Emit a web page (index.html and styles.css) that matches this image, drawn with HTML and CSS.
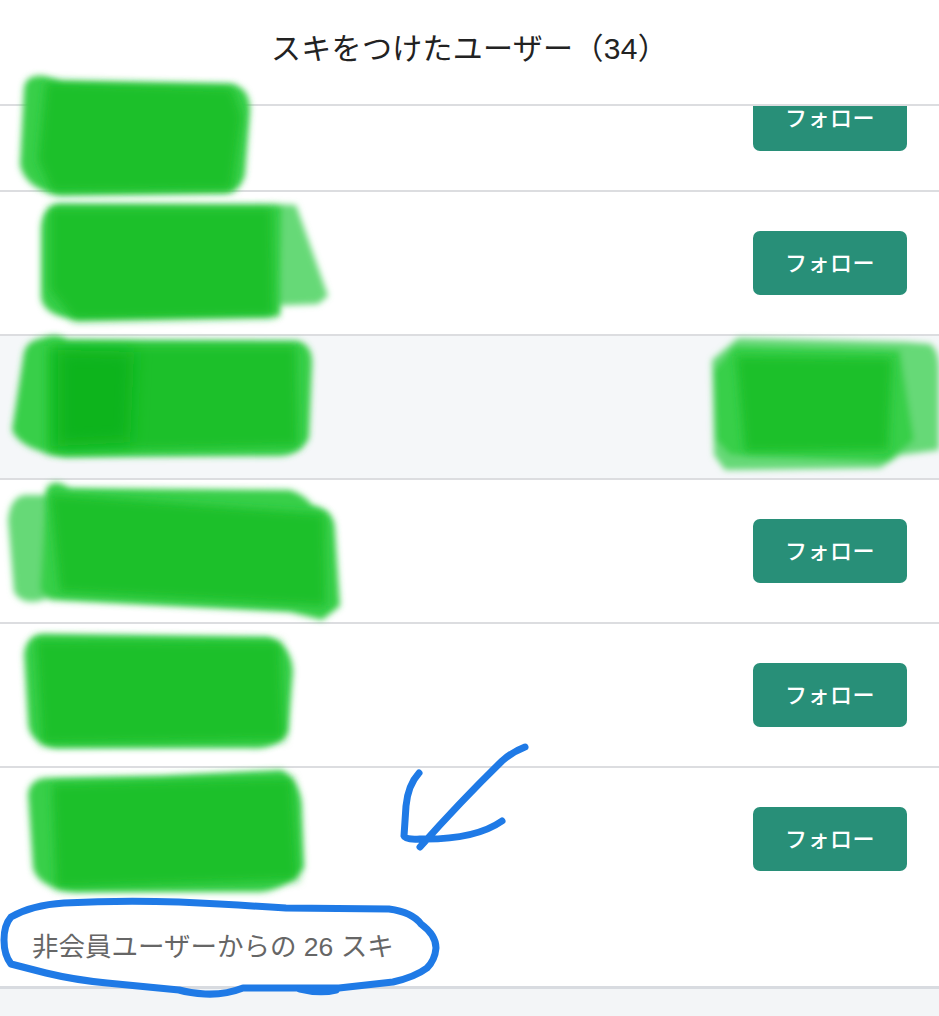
FILE: index.html
```html
<!DOCTYPE html>
<html lang="ja">
<head>
  <meta charset="UTF-8">
  <meta name="viewport" content="width=device-width, initial-scale=1.0">
  <title>スキをつけたユーザー</title>
  <link rel="stylesheet" href="styles.css">
</head>
<body>
  <div class="page">
    <h1 class="title">スキをつけたユーザー（34）</h1>

    <!-- User list, first row is scrolled under the header -->
    <ul class="user-list">
      <li class="user-row cut"><button class="follow cut-btn">フォロー</button></li>
      <li class="user-row"><button class="follow">フォロー</button></li>
      <li class="user-row self"></li>
      <li class="user-row"><button class="follow">フォロー</button></li>
      <li class="user-row"><button class="follow">フォロー</button></li>
      <li class="user-row last"><button class="follow">フォロー</button></li>
    </ul>

    <p class="guest-likes">非会員ユーザーからの 26 スキ</p>
    <div class="page-end"></div>

    <!-- Hand drawn marks on top of the screenshot -->
    <svg class="marks" width="939" height="1016" viewBox="0 0 939 1016">
      <defs>
        <filter id="soft" x="-10%" y="-10%" width="120%" height="120%">
          <feGaussianBlur stdDeviation="3"/>
        </filter>
        <filter id="softer" x="-10%" y="-10%" width="120%" height="120%">
          <feGaussianBlur stdDeviation="5"/>
        </filter>
        <filter id="softest" x="-30%" y="-30%" width="160%" height="160%">
          <feGaussianBlur stdDeviation="8"/>
        </filter>
      </defs>
      <g filter="url(#soft)">
        <path class="pale" d="M24 88 Q26 74 44 76 L62 82 L232 84 Q250 88 250 110 L245 175 Q240 192 225 193 L60 195 Q26 190 20 165 Z"/>

        <path class="faint" d="M270 204 L296 205 L328 296 L318 304 L270 306 Z"/>
        <path class="pale" d="M58 204 L282 205 L280 316 L75 319 Q44 316 41 298 L41 228 Q42 208 58 204 Z"/>

        <path class="pale" d="M24 352 Q28 340 42 338 Q56 332 68 340 L298 341 Q313 345 312 365 L309 438 Q300 455 280 456 L65 457 Q20 450 12 430 Z"/>

        <path class="faint" d="M738 338 L905 342 L930 344 Q939 350 939 370 L939 450 L900 455 L880 468 L725 470 L714 455 L712 360 Z"/>
        <path class="pale" d="M735 346 L900 350 L914 440 L888 462 L730 455 L716 440 L714 370 Z"/>

        <path class="faint" d="M24 495 L56 495 L56 595 Q24 610 14 592 L8 520 Q10 498 24 495 Z"/>
        <path class="pale" d="M46 490 Q50 480 62 484 L70 488 L290 490 Q305 495 312 505 Q335 510 335 530 L340 606 L322 620 L290 612 L50 600 L40 590 Z"/>

        <path class="pale" d="M42 634 L268 637 Q292 645 293 672 L288 732 Q275 750 250 748 L55 748 Q28 742 28 722 L24 654 Q26 636 42 634 Z"/>

        <path class="pale" d="M44 778 L160 776 L282 770 Q303 785 302 812 L304 868 Q285 890 260 892 L75 892 Q38 888 33 868 L28 794 Q30 780 44 778 Z"/>
      </g>
      <g filter="url(#softer)">
        <path class="ink" d="M46 82 L232 88 L242 116 L232 190 L52 192 L38 160 Z"/>
        <path class="ink" d="M50 208 L272 208 L274 316 L74 320 L50 290 Z"/>
        <path class="ink" d="M48 346 L296 346 L298 446 L48 452 Z"/>
        <path class="ink" d="M736 356 L892 358 L888 450 L745 452 Z"/>
        <path class="ink" d="M50 494 L324 514 L326 606 L60 592 Z"/>
        <path class="ink" d="M36 640 L280 642 L284 740 L42 744 Z"/>
        <path class="ink" d="M52 784 L292 778 L298 880 L56 888 Z"/>
      </g>
      <path class="dark" filter="url(#softest)" d="M58 350 L134 352 L130 442 L58 446 Z"/>
      <path class="pen" d="M525 747 Q512 752 502 761 Q460 802 420 847 M419 773 Q408 785 406 806 L404 836 Q405 840 420 839 Q475 840 502 821"/>
      <path class="pen" d="M64 903 Q120 900 179 902 Q240 905 286 908 L389 909 Q412 912 421 924 Q436 935 436 948 Q435 960 427 968 Q415 977 393 982 L339 988 L243 988 Q225 995 205 994 Q190 993 179 990 L107 983 Q75 980 46 973 L11 964 Q4 955 4 940 Q4 925 11 917 Q32 905 64 903 Z"/>
      <path class="pen" d="M300 989 Q320 994 336 990"/>
    </svg>
  </div>
</body>
</html>
```

FILE: styles.css
```css
html, body {
  margin: 0;
  padding: 0;
}

body {
  font-family: "Liberation Sans", "Noto Sans CJK JP", sans-serif;
  background-color: #fff;
  overflow: hidden;
}

.page {
  position: relative;
  display: flex;
  flex-direction: column;
  width: 939px;
  height: 1016px;
  overflow: hidden;
}

.title {
  box-sizing: border-box;
  height: 106px;
  margin: 0;
  line-height: 98px;
  font-size: 30px;
  font-weight: 400;
  letter-spacing: 0.3px;
  text-align: center;
  color: #222;
  border-bottom: 2px solid #dcdde0;
}

.user-list {
  list-style: none;
  margin: 0;
  padding: 0;
}

.user-row {
  display: flex;
  justify-content: flex-end;
  align-items: center;
  box-sizing: border-box;
  height: 144px;
  padding: 0 32px;
  border-bottom: 2px solid #dcdde0;
}

.user-row.cut {
  height: 86px;
  align-items: flex-start;
}

.user-row.self {
  background-color: #f5f7f9;
}

.user-row.last {
  border-bottom-color: transparent;
}

.follow {
  width: 154px;
  height: 64px;
  padding: 0 0 5px;
  border: none;
  border-radius: 7px;
  font-family: inherit;
  font-size: 22px;
  font-weight: 500;
  letter-spacing: 0.5px;
  color: #fff;
  background-color: #288f78;
}

.cut-btn {
  height: 45px;
  padding: 0 0 19px;
  line-height: 20px;
  border-radius: 0 0 7px 7px;
}

.guest-likes {
  margin: 0;
  padding-left: 32px;
  height: 74px;
  line-height: 70px;
  font-size: 26.5px;
  color: #666;
  border-bottom: 3px solid #d8dbe0;
}

.page-end {
  flex: 1;
  background-color: #f3f5f7;
}

.marks {
  position: absolute;
  top: 0;
  left: 0;
}

.ink {
  fill: #1bc02c;
}

.pale {
  fill: #37cf4a;
}

.faint {
  fill: #66d977;
}

.dark {
  fill: #11b41c;
}

.pen {
  fill: none;
  stroke: #1f7ae6;
  stroke-width: 7;
  stroke-linecap: round;
  stroke-linejoin: round;
}
```
